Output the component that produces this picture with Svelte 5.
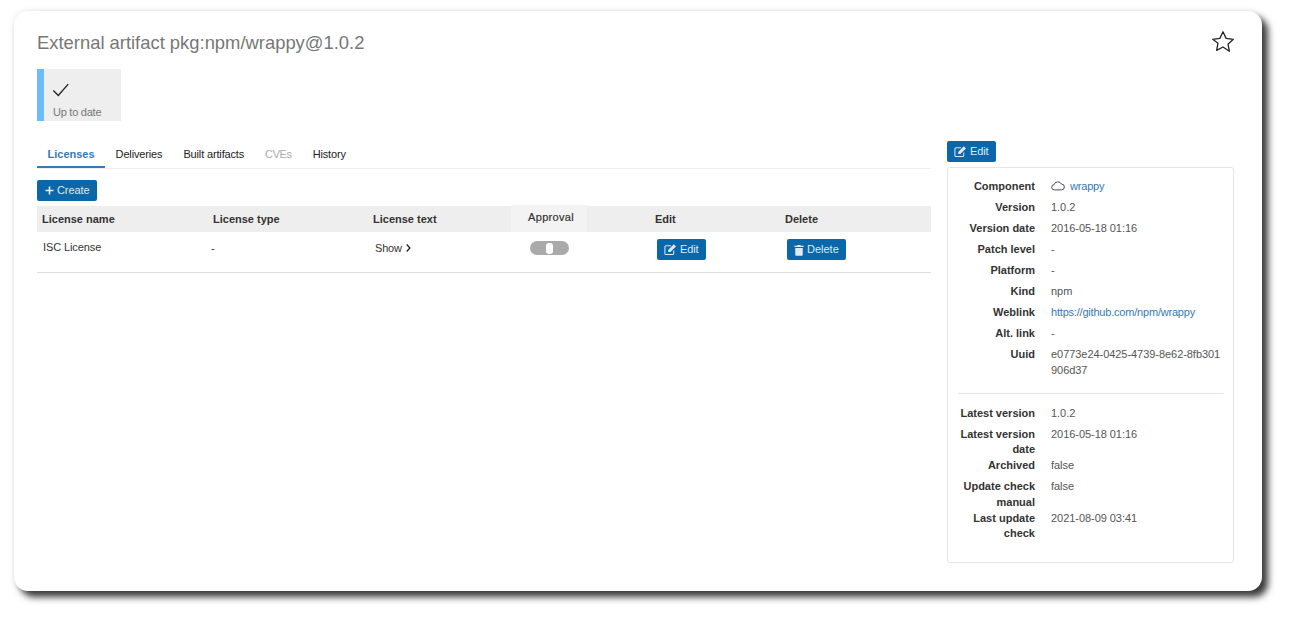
<script>
  const details = [
    { label: 'Version', value: '1.0.2' },
    { label: 'Version date', value: '2016-05-18 01:16' },
    { label: 'Patch level', value: '-' },
    { label: 'Platform', value: '-' },
    { label: 'Kind', value: 'npm' },
    { label: 'Weblink', value: 'https://github.com/npm/wrappy', link: true },
    { label: 'Alt. link', value: '-' },
    { label: 'Uuid', value: 'e0773e24-0425-4739-8e62-8fb301906d37' }
  ];
  const latest = [
    { label: 'Latest version', value: '1.0.2' },
    { label: 'Latest version date', value: '2016-05-18 01:16' },
    { label: 'Archived', value: 'false' },
    { label: 'Update check manual', value: 'false' },
    { label: 'Last update check', value: '2021-08-09 03:41' }
  ];
  const tabs = ['Licenses', 'Deliveries', 'Built artifacts', 'CVEs', 'History'];
</script>

{#snippet editIcon()}
  <svg class="ico" viewBox="0 0 14 14" width="13" height="13" aria-hidden="true">
    <path d="M10.500 8v3.200a1.300 1.300 0 0 1-1.300 1.300H2.300A1.300 1.300 0 0 1 1 11.200V4.300A1.300 1.300 0 0 1 2.300 3H7.500" fill="none" stroke="currentColor" stroke-width="1.100" />
    <path d="M4.500 7.500 10.600 1.400l2.300 2.300L6.800 9.800H4.500z" fill="currentColor" />
  </svg>
{/snippet}

<div class="page">
  <main class="card">
    <header class="head">
      <h1>External artifact pkg:npm/wrappy@1.0.2</h1>
      <svg class="star" viewBox="0 0 24 24" width="24" height="24" aria-hidden="true">
        <path d="M12 1.800l3.100 6.600 7.200.9-5.300 4.900 1.400 7.100L12 17l-6.400 3.300L7 13.200 1.700 9.300l7.200-.9z" fill="none" stroke="#222" stroke-width="1.300" stroke-linejoin="round" />
      </svg>
    </header>

    <div class="status">
      <svg viewBox="0 0 20 20" width="18" height="18" aria-hidden="true">
        <path d="M1.500 10.500l5.500 5.500L18 3.500" fill="none" stroke="#222" stroke-width="1.500" />
      </svg>
      <span>Up to date</span>
    </div>

    <div class="columns">
      <section class="left">
        <nav class="tabs">
          {#each tabs as tab, i}
            <span class="tab" class:active={i === 0} class:disabled={tab === 'CVEs'}>{tab}</span>
          {/each}
        </nav>

        <button class="btn create">
          <svg class="ico" viewBox="0 0 10 10" width="9" height="9" aria-hidden="true">
            <path d="M5 .5v9M.5 5h9" stroke="currentColor" stroke-width="1.800" />
          </svg>
          Create
        </button>

        <table>
          <thead>
            <tr>
              <th class="c1">License name</th>
              <th class="c2">License type</th>
              <th class="c3">License text</th>
              <th class="c4"><div class="approval">Approval</div></th>
              <th class="c5">Edit</th>
              <th class="c6">Delete</th>
            </tr>
          </thead>
          <tbody>
            <tr>
              <td class="name">ISC License</td>
              <td class="type">-</td>
              <td class="show">
                Show
                <svg viewBox="0 0 8 10" width="7" height="10" aria-hidden="true">
                  <path d="M2 1l3.600 4L2 9" fill="none" stroke="#222" stroke-width="1.500" />
                </svg>
              </td>
              <td class="toggle-cell"><div class="toggle"><i></i></div></td>
              <td class="action"><button class="btn">{@render editIcon()} Edit</button></td>
              <td class="action">
                <button class="btn delete">
                  <svg class="ico" viewBox="0 0 12 14" width="10" height="12" aria-hidden="true">
                    <path d="M4 1h4v1h3.500v1.500H.5V2H4zM1.500 4.500h9V13a1 1 0 0 1-1 1h-7a1 1 0 0 1-1-1z" fill="currentColor" />
                  </svg>
                  Delete
                </button>
              </td>
            </tr>
          </tbody>
        </table>
      </section>

      <aside class="side">
        <button class="btn">{@render editIcon()} Edit</button>
        <div class="panel">
          <dl>
            <dt>Component</dt>
            <dd>
              <svg class="cloud" viewBox="0 0 16 12" width="14" height="11" aria-hidden="true">
                <path d="M4 11a3 3 0 0 1-.4-6A4.500 4.500 0 0 1 12 4.400 3.300 3.300 0 0 1 12 11z" fill="none" stroke="#333" stroke-width="1" />
              </svg>
              <a href="#top">wrappy</a>
            </dd>
            {#each details as d}
              <dt>{d.label}</dt>
              <dd>{#if d.link}<a href="#top">{d.value}</a>{:else}{d.value}{/if}</dd>
            {/each}
          </dl>
          <hr />
          <dl>
            {#each latest as d}
              <dt>{d.label}</dt>
              <dd>{d.value}</dd>
            {/each}
          </dl>
        </div>
      </aside>
    </div>
  </main>
</div>

<style>
  :global(body) {
    margin: 0;
    background: #fff;
  }

  .page {
    padding: 11px 27px 34px 14px;
    font-family: "Liberation Sans", Arial, sans-serif;
    font-size: 11px;
    line-height: 15.7px;
    color: #333;
  }

  .card {
    height: 580px;
    box-sizing: border-box;
    padding: 18px 28px 0 23px;
    background: #fff;
    border-radius: 14px;
    box-shadow: 6px 6px 7px #3a3a3a, 0 0 6px rgba(0, 0, 0, 0.1);
  }

  .head {
    display: flex;
    justify-content: space-between;
    align-items: flex-start;
  }

  h1 {
    margin: 0;
    padding-top: 1px;
    font-size: 18.4px;
    font-weight: 400;
    line-height: 25px;
    color: #777;
  }

  .star {
    margin: 1px -1px 0 0;
  }

  .status {
    display: flex;
    flex-direction: column;
    box-sizing: border-box;
    width: 84px;
    height: 52px;
    margin-top: 14px;
    padding: 12px 0 0 8px;
    background: #eee;
    border-left: 7px solid #6cbcf9;
    color: #777;
  }

  .status span {
    margin: 6px 0 0 1px;
    letter-spacing: -0.25px;
  }

  .columns {
    display: flex;
    gap: 16px;
    margin-top: 20px;
  }

  .left {
    width: 894px;
    padding-top: 2px;
  }

  .tabs {
    display: flex;
    border-bottom: 1px solid #eee;
    height: 25px;
  }

  .tab {
    box-sizing: border-box;
    height: 25px;
    padding: 4px 10.500px 0;
    letter-spacing: -0.15px;
    color: #222;
  }

  .tab.active {
    border-bottom: 2px solid #337ab7;
    letter-spacing: 0;
    font-weight: 700;
    color: #337ab7;
  }

  .tab.disabled {
    letter-spacing: -0.4px;
    color: #aaa;
  }

  .btn {
    display: inline-flex;
    align-items: center;
    gap: 3px;
    box-sizing: border-box;
    height: 21px;
    padding: 0 7px;
    background: #0a68aa;
    border: 0;
    border-radius: 2px;
    font: inherit;
    letter-spacing: -0.1px;
    color: #dfe9f2;
  }

  .btn.delete {
    letter-spacing: 0;
  }

  .create {
    display: flex;
    margin-top: 11px;
    padding: 0 8px;
  }

  table {
    width: 100%;
    margin-top: 5px;
    border-collapse: collapse;
    table-layout: fixed;
  }

  th {
    box-sizing: border-box;
    height: 26px;
    padding: 2px 0 0 5px;
    background: #eee;
    text-align: left;
    font-weight: 700;
    color: #333;
  }

  .c1 { width: 171px; }
  .c2 { width: 160px; }
  .c3 { width: 143px; }
  .c4 { width: 139px; padding: 0; }
  .c5 { width: 130px; }

  .approval {
    box-sizing: border-box;
    width: 76px;
    height: 27px;
    margin-top: -1px;
    padding: 5px 0 0 4px;
    background: #f3f3f3;
    font-weight: 400;
    letter-spacing: 0.3px;
    text-align: center;
    -webkit-text-stroke: 0.2px #333;
  }

  td {
    box-sizing: border-box;
    height: 40px;
    padding: 9px 0 0 7px;
    border-bottom: 1px solid #ddd;
    vertical-align: top;
  }

  .name {
    padding: 8px 0 0 6px;
    letter-spacing: -0.1px;
  }

  .type {
    padding-left: 3px;
  }

  .show {
    letter-spacing: -0.2px;
  }

  .show svg {
    vertical-align: -1px;
  }

  .toggle-cell {
    padding: 9px 0 0 19px;
  }

  .toggle {
    display: flex;
    justify-content: center;
    align-items: center;
    width: 39px;
    height: 14px;
    background: #aaa;
    border-radius: 7px;
  }

  .toggle i {
    width: 7px;
    height: 11px;
    background: #fff;
    border-radius: 3px;
  }

  .action {
    padding-top: 7px;
  }

  .side {
    width: 287px;
  }

  .side > .btn {
    display: flex;
  }

  .panel {
    box-sizing: border-box;
    height: 396px;
    margin-top: 5px;
    padding: 11px 10px;
    background: #fff;
    border: 1px solid #e5e5e5;
    border-radius: 3px;
  }

  dl {
    display: grid;
    grid-template-columns: 77px 1fr;
    column-gap: 16px;
    margin: 0;
  }

  dt {
    font-weight: 700;
    text-align: right;
    color: #333;
  }

  dd {
    margin: 0;
    padding-bottom: 5.3px;
    word-break: break-all;
    letter-spacing: -0.05px;
    color: #555;
  }

  a {
    letter-spacing: -0.2px;
    color: #337ab7;
    text-decoration: none;
  }

  .cloud {
    margin-right: 2px;
    vertical-align: -1px;
  }

  hr {
    height: 1px;
    margin: 9px 0 12px;
    background: #e5e5e5;
    border: 0;
  }

  .ico {
    flex: none;
  }
</style>
